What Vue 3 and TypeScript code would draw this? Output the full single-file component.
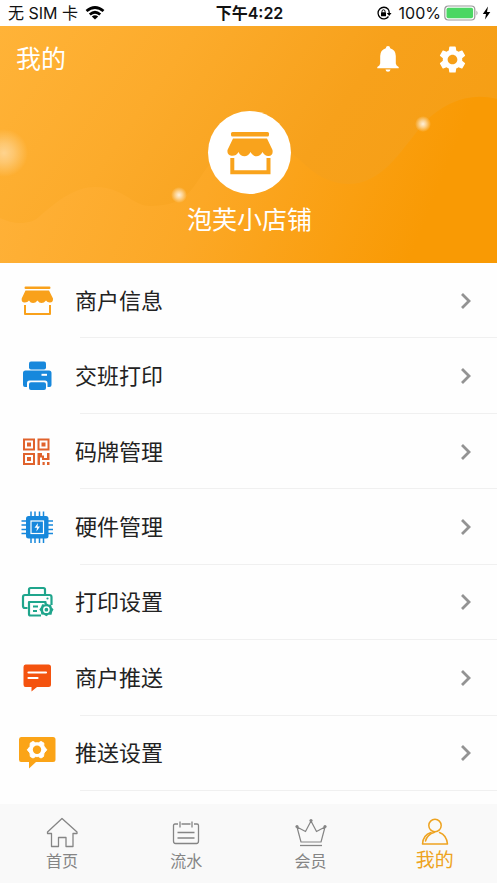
<script setup lang="ts">
import { ref } from 'vue'

interface MenuItem {
  label: string
  icon: string
  color: string
}

interface TabItem {
  label: string
  icon: string
}

const shopName = '泡芙小店铺'

const menu: MenuItem[] = [
  { label: '商户信息', icon: 'shop', color: '#f9a11b' },
  { label: '交班打印', icon: 'printer', color: '#1788dc' },
  { label: '码牌管理', icon: 'qrcode', color: '#e0622c' },
  { label: '硬件管理', icon: 'chip', color: '#1788dc' },
  { label: '打印设置', icon: 'print-setup', color: '#1fa58c' },
  { label: '商户推送', icon: 'message', color: '#f4530f' },
  { label: '推送设置', icon: 'push-setup', color: '#fba417' },
]

const tabs: TabItem[] = [
  { label: '首页', icon: 'home' },
  { label: '流水', icon: 'records' },
  { label: '会员', icon: 'crown' },
  { label: '我的', icon: 'person' },
]

const activeTab = ref('我的')
</script>

<template>
  <div class="page">
    <svg class="sprite" aria-hidden="true">
      <symbol id="i-shop" viewBox="0 0 40 40">
        <rect x="7.500" y="5.500" width="26" height="2.500" rx="1.200" fill="currentColor" />
        <path
          d="M8.500 9.500H32L36 17.500Q36.300 21.500 33 21.600Q30.300 21.700 29 19.500Q27 22 24.500 22Q22 22 20.500 19.500Q18.500 22 16 22Q13.500 22 12 19.500Q10.600 21.700 7.500 21.600Q4.200 21.500 4.700 17.500Z"
          fill="currentColor"
        />
        <path d="M8 24V33H33V24" fill="none" stroke="currentColor" stroke-width="2" stroke-linejoin="round" />
      </symbol>

      <symbol id="i-shop-solid" viewBox="0 0 48 46">
        <rect x="5" y="2" width="38" height="4.500" rx="1.500" fill="currentColor" />
        <path
          d="M7 8.500H41L46.500 20Q47.500 25.500 42.500 26Q39 26.300 36.500 22Q34 26.300 30.500 26.300Q27 26.300 24.500 22Q22 26.300 18.500 26.300Q14.500 26.300 12.500 22Q10 26.300 5.500 25.800Q.8 25 1.500 20Z"
          fill="currentColor"
        />
        <path d="M6.300 28V42.300H42.500V28" fill="none" stroke="currentColor" stroke-width="4" />
      </symbol>

      <symbol id="i-printer" viewBox="0 0 40 40">
        <rect x="12" y="5.500" width="17" height="8" rx="2" fill="currentColor" />
        <path
          d="M8.500 14.500H32Q34.500 14.500 34.500 17V29Q34.500 31 32.500 31H30.500V27Q30.500 24.500 28 24.500H12.500Q10 24.500 10 27V31H8Q6 31 6 29V17Q6 14.500 8.500 14.500Z"
          fill="currentColor"
        />
        <path d="M24.500 18.800H30" stroke="#fff" stroke-width="2" />
        <rect x="12" y="26.300" width="17" height="7.700" rx="2" fill="currentColor" />
      </symbol>

      <symbol id="i-qrcode" viewBox="0 0 40 40">
        <g fill="none" stroke="currentColor" stroke-width="2">
          <rect x="7" y="7.500" width="10" height="10" />
          <rect x="21.500" y="7.500" width="10" height="10" />
          <rect x="7" y="22" width="10" height="10" />
        </g>
        <g fill="currentColor">
          <rect x="10" y="10.500" width="4" height="4" />
          <rect x="24.500" y="10.500" width="4" height="4" />
          <rect x="10" y="25" width="4" height="4" />
          <path d="M20.500 21H25V23.500H27V26H30V21H32.500V28H25V25.500H23V33H20.500Z" />
          <rect x="25.500" y="30" width="2.200" height="3" />
          <rect x="30" y="30" width="2.500" height="3" />
        </g>
      </symbol>

      <symbol id="i-chip" viewBox="0 0 40 40">
        <rect x="9" y="9" width="22.500" height="22.500" rx="2.500" fill="currentColor" />
        <path
          d="M14 4.500V36M18 4.500V36M22.500 4.500V36M26.500 4.500V36M4.500 14H36M4.500 18H36M4.500 22.500H36M4.500 26.500H36"
          stroke="currentColor"
          stroke-width="1.500"
        />
        <rect x="14" y="14" width="12.500" height="12.500" fill="none" stroke="#fff" stroke-width="1.200" />
        <path d="M21 16L17.500 20.800H20L19.400 24.500L23 19.600H20.500Z" fill="#fff" />
      </symbol>

      <symbol id="i-print-setup" viewBox="0 0 40 40">
        <g fill="none" stroke="currentColor" stroke-width="2.200" stroke-linejoin="round">
          <path d="M12 12.500V7.500Q12 6 13.500 6H26.500Q28 6 28 7.500V12.500" />
          <path d="M10.500 26H8Q6 26 6 24V15Q6 13 8 13H32.500Q34.500 13 34.500 15V23" />
          <path d="M24 33.500H13.500Q12 33.500 12 32V20H28.500V22" />
          <path d="M16 24.500H21M16 29H20" stroke-width="1.800" />
        </g>
        <circle cx="30.500" cy="16.500" r="1.100" fill="currentColor" />
        <path
          d="M25.200 22.300L27.500 22.500L29.400 21.300L31.500 22.500L34 22.700L34.800 25.500L36.500 27.500L35.200 29.700L34.500 32.700L31.500 32.800L29.400 34.300L27 32.800L24.300 32.500L23.800 29.500L22.300 27.500L23.800 25.500Z"
          fill="currentColor"
        />
        <circle cx="29.400" cy="27.700" r="2.600" fill="none" stroke="#fff" stroke-width="1.500" />
      </symbol>

      <symbol id="i-message" viewBox="0 0 40 40">
        <path
          d="M8.500 6.500H31.500Q34 6.500 34 9V26.500Q34 29 31.500 29H20L14.500 33.500V29H8.500Q6.500 29 6.500 26.500V9Q6.500 6.500 8.500 6.500Z"
          fill="currentColor"
        />
        <path d="M11.500 14.500H29M11.500 20H20.500" stroke="#fff" stroke-width="2.200" stroke-linecap="round" />
      </symbol>

      <symbol id="i-push-setup" viewBox="0 0 40 40">
        <path
          d="M4 4H36Q38.500 4 38.500 6.500V26.500Q38.500 29 36 29H19L12 35.500V29H4Q2 29 2 26.500V6.500Q2 4 4 4Z"
          fill="currentColor"
        />
        <path
          d="M16 8.500L18.500 9.800L21.500 9.800L24 8.500L26.800 10L26.800 13L29.800 16.800L27 20L26.500 23.500L24 25L21.500 23.600L18.500 23.600L16 25L13.300 23.500L13 20L10.300 16.800L13 13.500L13.300 10Z"
          fill="#fff"
          stroke="#fff"
          stroke-linejoin="round"
        />
        <circle cx="20" cy="16.800" r="4.200" fill="currentColor" />
      </symbol>

      <symbol id="i-bell" viewBox="0 0 24 28">
        <path
          d="M12 1Q14 1 14.200 3.200Q19.800 5 19.800 11V18.500Q20 20.500 22.700 22V23.300H1.300V22Q4 20.500 4.200 18.500V11Q4.200 5 9.800 3.200Q10 1 12 1ZM9.500 24.500H14.500Q14.200 26.800 12 26.800Q9.800 26.800 9.500 24.500Z"
          fill="currentColor"
        />
      </symbol>

      <symbol id="i-gear" viewBox="2 2 20 20">
        <path
          d="M19.140 12.940c.04-.3.060-.61.060-.94 0-.32-.02-.64-.07-.94l2.030-1.580c.18-.14.230-.41.120-.61l-1.920-3.320c-.12-.22-.37-.29-.59-.22l-2.390.96c-.5-.38-1.030-.7-1.620-.94l-.36-2.540c-.04-.24-.24-.41-.48-.41h-3.840c-.24 0-.43.170-.47.410l-.36 2.540c-.59.240-1.130.570-1.620.940l-2.390-.96c-.22-.08-.47 0-.59.220L2.740 8.870c-.12.210-.08.470.12.610l2.030 1.580c-.05.3-.09.630-.09.940s.02.640.070.940l-2.030 1.580c-.18.140-.23.410-.12.610l1.920 3.320c.12.220.370.290.590.220l2.390-.96c.5.380 1.030.7 1.620.940l.36 2.540c.05.240.240.410.480.410h3.840c.24 0 .44-.17.470-.41l.36-2.540c.59-.24 1.130-.56 1.620-.94l2.390.96c.22.080.470 0 .59-.22l1.920-3.320c.12-.22.070-.47-.12-.61l-2.010-1.580zM12 15.600c-1.980 0-3.600-1.620-3.600-3.600s1.620-3.600 3.600-3.600 3.600 1.620 3.600 3.600-1.620 3.600-3.600 3.600z"
          fill="currentColor"
        />
      </symbol>

      <symbol id="i-home" viewBox="0 0 34 34">
        <path
          d="M17 3.500L32 17V18.500H28V31.500H21V22.500H13.500V31.500H6.500V18.500H2.500V17Z"
          fill="none"
          stroke="currentColor"
          stroke-width="1.300"
          stroke-linejoin="round"
        />
      </symbol>

      <symbol id="i-records" viewBox="0 0 34 34">
        <g fill="none" stroke="currentColor" stroke-width="1.300">
          <path
            d="M9 9H6Q4.500 9 4.500 10.500V26Q4.500 28.500 6.500 28.500H27.500Q29.500 28.500 29.500 26V10.500Q29.500 9 28 9H25M12.500 9H21.500M11 6.500V12.500M23 6.500V12.500M8.500 17.500H25.500M8.500 23H25.500"
          />
        </g>
      </symbol>

      <symbol id="i-crown" viewBox="0 0 34 34">
        <path
          d="M3 12L7 27H27L31 12L22.500 16.500L17 6L11.500 16.500Z"
          fill="none"
          stroke="currentColor"
          stroke-width="1.200"
          stroke-linejoin="round"
        />
        <path d="M6 30.500H28" stroke="currentColor" stroke-width="1.300" />
        <g fill="currentColor">
          <circle cx="17" cy="5.500" r="1.600" />
          <circle cx="3" cy="11.500" r="1.600" />
          <circle cx="31" cy="11.500" r="1.600" />
        </g>
      </symbol>

      <symbol id="i-person" viewBox="0 0 34 34">
        <g fill="none" stroke="currentColor" stroke-width="1.500" stroke-linecap="round" stroke-linejoin="round">
          <circle cx="17" cy="10.500" r="6.200" />
          <path d="M13 17.500Q5 20 4.500 29H29.500Q28.500 20 21.500 17.500" />
          <path d="M7.500 26Q9 19.500 16.500 17.200" />
        </g>
      </symbol>
    </svg>

    <header class="status">
      <div class="status-left">
        <span>无 SIM 卡</span>
        <svg class="wifi" viewBox="0 0 20 14" aria-hidden="true">
          <g fill="none" stroke="#000" stroke-width="2.800">
            <path d="M1.500 5Q10-2 18.500 5" />
            <path d="M4.800 8.500Q10 4 15.200 8.500" />
          </g>
          <path d="M6.800 10.500Q10 7.800 13.200 10.500L10 13.500Z" fill="#000" />
        </svg>
      </div>
      <strong class="status-time">下午4:22</strong>
      <div class="status-right">
        <svg class="lock" viewBox="0 0 16 14" aria-hidden="true">
          <path d="M12.200 3.200A5.800 5.800 0 1 0 12.500 10.500" fill="none" stroke="#000" stroke-width="1.300" />
          <path d="M12.200 3.200Q13.200 4.500 13.300 7.500" fill="none" stroke="#000" stroke-width="1.300" />
          <path d="M10.800 7H15.500L13.200 10Z" fill="#000" />
          <rect x="5" y="6.300" width="5" height="4" rx=".5" fill="#000" />
          <path d="M6 6.500V5.300Q6 3.800 7.500 3.800Q9 3.800 9 5.300V6.500" fill="none" stroke="#000" />
        </svg>
        <span>100%</span>
        <svg class="battery" viewBox="0 0 35 16" aria-hidden="true">
          <rect x=".8" y="1" width="30" height="14" rx="3.500" fill="#fff" stroke="#999" stroke-width="1.200" />
          <rect x="2.500" y="2.700" width="26.600" height="10.600" rx="1.800" fill="#4bd763" />
          <path d="M32.500 5.500Q34.500 8 32.500 10.500Z" fill="#999" />
        </svg>
        <svg class="bolt" viewBox="0 0 9 14" aria-hidden="true">
          <path d="M6 .5L.8 8H4L3 13.500L8.300 6H5Z" fill="#000" />
        </svg>
      </div>
    </header>

    <section class="hero">
      <svg class="hero-art" viewBox="0 0 497 237" preserveAspectRatio="none" aria-hidden="true">
        <defs>
          <linearGradient id="wave-fill" gradientUnits="userSpaceOnUse" x1="0" y1="100" x2="400" y2="260">
            <stop offset="0" stop-color="#ffb23a" />
            <stop offset="0.500" stop-color="#fca826" />
            <stop offset="1" stop-color="#f99a04" />
          </linearGradient>
          <radialGradient id="glow">
            <stop offset="0" stop-color="#fff" stop-opacity="0.450" />
            <stop offset="0.400" stop-color="#fff" stop-opacity="0.300" />
            <stop offset="1" stop-color="#fff" stop-opacity="0" />
          </radialGradient>
          <radialGradient id="spark">
            <stop offset="0" stop-color="#fff" stop-opacity="0.850" />
            <stop offset="0.400" stop-color="#fff" stop-opacity="0.550" />
            <stop offset="1" stop-color="#fff" stop-opacity="0" />
          </radialGradient>
        </defs>
        <path
          d="M0 192C12 198 30 200 40 190C58 174 76 161 95 161C124 161 132 180 150 180C190 180 192 160 210 138C240 105 270 108 300 134C315 149 330 158 348 158C382 158 398 128 424 97C444 76 470 66 497 73V237H0Z"
          fill="url(#wave-fill)"
        />
        <circle cx="4" cy="127" r="24" fill="url(#glow)" />
        <circle cx="179" cy="169" r="8" fill="url(#spark)" />
        <circle cx="423" cy="98" r="8" fill="url(#spark)" />
      </svg>

      <div class="hero-bar">
        <h1 class="hero-title">我的</h1>
        <div class="hero-actions">
          <button class="icon-button" type="button" aria-label="通知">
            <svg class="bell"><use href="#i-bell" /></svg>
          </button>
          <button class="icon-button" type="button" aria-label="设置">
            <svg class="gear"><use href="#i-gear" /></svg>
          </button>
        </div>
      </div>

      <div class="shop">
        <div class="avatar">
          <svg class="avatar-icon"><use href="#i-shop-solid" /></svg>
        </div>
        <p class="shop-name">{{ shopName }}</p>
      </div>
    </section>

    <main class="menu">
      <a v-for="item in menu" :key="item.label" class="row" href="#">
        <svg class="row-icon" :style="{ color: item.color }" aria-hidden="true">
          <use :href="`#i-${item.icon}`" />
        </svg>
        <span class="row-label">{{ item.label }}</span>
        <svg class="chevron" viewBox="0 0 12 18" aria-hidden="true">
          <path d="M2 2L9 9L2 16" fill="none" stroke="#939393" stroke-width="2.800" />
        </svg>
      </a>
    </main>

    <nav class="tabs">
      <button
        v-for="tab in tabs"
        :key="tab.label"
        type="button"
        class="tab"
        :class="{ active: tab.label === activeTab }"
        @click="activeTab = tab.label"
      >
        <svg class="tab-icon" aria-hidden="true"><use :href="`#i-${tab.icon}`" /></svg>
        <span class="tab-label">{{ tab.label }}</span>
      </button>
    </nav>
  </div>
</template>

<style>
body {
  background: #fff;
}
</style>

<style scoped>
.page {
  display: flex;
  flex-direction: column;
  min-height: 100vh;
  background: #fefefe;
  color: #222;
  font-family: Inter, 'Noto Sans CJK SC', sans-serif;
}

.sprite {
  position: absolute;
  width: 0;
  height: 0;
}

.status {
  display: grid;
  grid-template-columns: 1fr auto 1fr;
  align-items: center;
  height: 26px;
  padding: 0 6px 0 8px;
  background: #fff;
  color: #111;
  font-size: 16px;
  line-height: 26px;
}

.status-left,
.status-right {
  display: flex;
  align-items: center;
}

.status-left {
  gap: 7px;
}

.status-right {
  justify-content: flex-end;
  gap: 3px;
}

.status-time {
  font-weight: 600;
}

.wifi {
  width: 20px;
  height: 14px;
}

.lock {
  width: 16px;
  height: 14px;
  margin-right: 4px;
}

.battery {
  width: 35px;
  height: 16px;
}

.bolt {
  width: 9px;
  height: 14px;
}

.hero {
  position: relative;
  padding-bottom: 25px;
  background: linear-gradient(125deg, #ffb338 0%, #fcab2b 30%, #f7a11b 60%, #f59d10 100%);
  color: #fff;
}

.hero-art {
  position: absolute;
  inset: 0;
  width: 100%;
  height: 100%;
}

.hero-bar,
.shop {
  position: relative;
}

.hero-bar {
  display: flex;
  align-items: center;
  justify-content: space-between;
  height: 66px;
  padding: 0 27px 0 16px;
}

.hero-title {
  margin: 0;
  font-size: 25px;
  font-weight: 400;
  line-height: 36px;
}

.hero-actions {
  display: flex;
  gap: 28px;
}

.icon-button {
  display: grid;
  place-items: center;
  width: 36px;
  height: 36px;
  padding: 0;
  border: 0;
  background: none;
  color: #fff;
}

.bell {
  width: 24px;
  height: 28px;
}

.gear {
  width: 27px;
  height: 27px;
}

.shop {
  display: flex;
  flex-direction: column;
  align-items: center;
  gap: 8px;
  padding: 19px 0 0 2px;
}

.avatar {
  display: grid;
  place-items: center;
  width: 83px;
  height: 83px;
  border-radius: 50%;
  background: #fff;
  color: #f9a31c;
}

.avatar-icon {
  width: 48px;
  height: 46px;
}

.shop-name {
  margin: 0;
  font-size: 25px;
  line-height: 36px;
}

.menu {
  display: flex;
  flex: 1;
  flex-direction: column;
  padding-bottom: 13px;
}

.row {
  position: relative;
  display: flex;
  flex: 1;
  align-items: center;
  min-height: 60px;
  padding: 0 25px 0 17px;
  color: inherit;
  text-decoration: none;
}

.row::after {
  position: absolute;
  right: 0;
  bottom: 0;
  left: 80px;
  height: 1px;
  background: #f0f0f0;
  content: '';
}

.row-icon {
  width: 40px;
  height: 40px;
}

.row-label {
  flex: 1;
  margin-left: 18px;
  font-size: 22px;
  line-height: 32px;
}

.chevron {
  width: 12px;
  height: 18px;
}

.tabs {
  display: grid;
  grid-template-columns: repeat(4, 1fr);
  height: 79px;
  background: #f9f9f9;
}

.tab {
  display: flex;
  flex-direction: column;
  align-items: center;
  padding: 11px 0 0;
  border: 0;
  background: none;
  color: #858585;
  font-family: inherit;
}

.tab-icon {
  width: 34px;
  height: 34px;
}

.tab-label {
  font-size: 16px;
  line-height: 24px;
}

.tab.active {
  color: #eea320;
}

.tab.active .tab-label {
  font-size: 19px;
}
</style>
